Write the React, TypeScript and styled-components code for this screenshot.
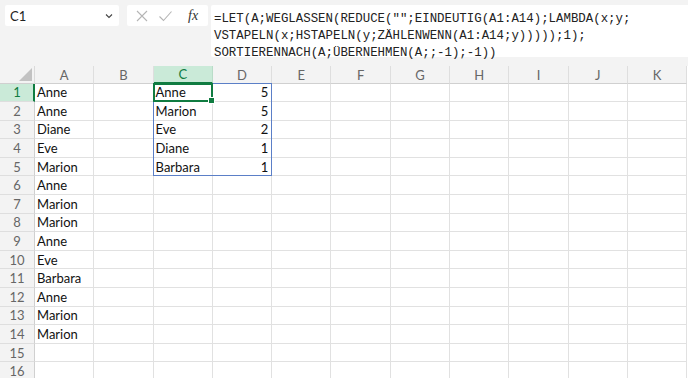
import React from "react";
import styled, { createGlobalStyle } from "styled-components";

const GlobalStyle = createGlobalStyle`
  html, body { margin: 0; padding: 0; background: #f3f3f3; overflow: hidden; }
  * { box-sizing: border-box; }
`;

const COL_W = 59.3;
const ROW_H = 18.6;
const HEAD_H = 17.5;
const ROWHEAD_W = 35;
const COLS = ["A", "B", "C", "D", "E", "F", "G", "H", "I", "J", "K"];

const Page = styled.div`
  width: 688px;
  height: 378px;
  overflow: hidden;
  background: #f3f3f3;
  font-family: Lato, "Open Sans", sans-serif;
`;

const TopBar = styled.div`
  display: flex;
  align-items: flex-start;
  height: 66px;
  padding: 5px 0 0 5px;
`;

const NameBox = styled.div`
  width: 114px;
  height: 21px;
  background: #fff;
  border-radius: 2px;
  display: flex;
  align-items: center;
  justify-content: space-between;
  padding: 0 5px 0 5px;
  font-size: 13px;
  color: #222;
`;

const FxButtons = styled.div`
  width: 81px;
  height: 21px;
  margin-left: 8px;
  background: #fff;
  border-radius: 2px;
  display: flex;
  align-items: center;
  padding-left: 8px;
  gap: 9px;
`;

const FxLabel = styled.span`
  font-family: "Liberation Serif", serif;
  font-style: italic;
  font-size: 14px;
  color: #333;
  margin-left: 6px;
`;

const FormulaInput = styled.div`
  flex: 1;
  height: 52px;
  margin-left: 3px;
  background: #fff;
  border-radius: 2px 0 0 2px;
  padding: 6px 0 0 3px;
  font-family: "Liberation Mono", monospace;
  font-size: 12.4px;
  line-height: 17px;
  color: #222;
  white-space: pre;
`;

const Grid = styled.div`
  display: grid;
  grid-template-columns: ${ROWHEAD_W}px repeat(${COLS.length}, ${COL_W}px);
  grid-template-rows: ${HEAD_H}px repeat(16, ${ROW_H}px);
  background: #fff;
`;

const Corner = styled.div`
  grid-column: 1;
  grid-row: 1;
  background: #f3f3f3;
  border-right: 1px solid #dadada;
  border-bottom: 1px solid #d0d0d0;
  position: relative;
  &::after {
    content: "";
    position: absolute;
    right: 2px;
    bottom: 2px;
    width: 0;
    height: 0;
    border-left: 13px solid transparent;
    border-bottom: 13px solid #c2c2c2;
  }
`;

const ColHead = styled.div<{ $sel?: boolean; $col: number }>`
  grid-row: 1;
  grid-column: ${(p) => p.$col};
  background: ${(p) => (p.$sel ? "#caead8" : "#f3f3f3")};
  color: ${(p) => (p.$sel ? "#107c41" : "#666")};
  border-right: 1px solid ${(p) => (p.$sel ? "#b9dcc8" : "#dedede")};
  border-bottom: ${(p) => (p.$sel ? "2px solid #107c41" : "1px solid #d0d0d0")};
  font-size: 13px;
  display: flex;
  align-items: center;
  justify-content: center;
  padding-top: 1px;
`;

const RowHead = styled.div<{ $sel?: boolean; $row: number }>`
  grid-column: 1;
  grid-row: ${(p) => p.$row};
  background: ${(p) => (p.$sel ? "#caead8" : "#f3f3f3")};
  color: ${(p) => (p.$sel ? "#107c41" : "#666")};
  border-right: ${(p) => (p.$sel ? "2px solid #107c41" : "1px solid #d0d0d0")};
  border-bottom: 1px solid #dedede;
  font-size: 13px;
  display: flex;
  align-items: center;
  justify-content: center;
  padding-left: ${(p) => (p.$sel ? "1px" : "0")};
`;

const Cell = styled.div<{ $num?: boolean; $row: number; $col: number }>`
  grid-row: ${(p) => p.$row};
  grid-column: ${(p) => p.$col};
  border-right: 1px solid #e1e1e1;
  border-bottom: 1px solid #e1e1e1;
  font-size: 13px;
  color: #111;
  display: flex;
  align-items: center;
  justify-content: ${(p) => (p.$num ? "flex-end" : "flex-start")};
  padding: 0 3px 0 2px;
  white-space: nowrap;
`;

const SpillBox = styled.div`
  grid-column: 4 / 6;
  grid-row: 2 / 7;
  border: 1px solid #5b7fc7;
  margin: -1px 0 0 -1px;
  pointer-events: none;
  z-index: 1;
`;

const ActiveBox = styled.div`
  grid-column: 4 / 5;
  grid-row: 2 / 3;
  border: 2px solid #107c41;
  margin: -1px 0 0 -1px;
  pointer-events: none;
  position: relative;
  z-index: 2;
  &::after {
    content: "";
    position: absolute;
    right: -4px;
    bottom: -4px;
    width: 5px;
    height: 5px;
    background: #107c41;
    border: 1px solid #fff;
  }
`;

const colA = [
  "Anne", "Anne", "Diane", "Eve", "Marion", "Anne", "Marion", "Marion",
  "Anne", "Eve", "Barbara", "Anne", "Marion", "Marion", "", "",
];
const colC = ["Anne", "Marion", "Eve", "Diane", "Barbara"];
const colD = ["5", "5", "2", "1", "1"];

const formula = `=LET(A;WEGLASSEN(REDUCE("";EINDEUTIG(A1:A14);LAMBDA(x;y;
VSTAPELN(x;HSTAPELN(y;ZÄHLENWENN(A1:A14;y)))));1);
SORTIERENNACH(A;ÜBERNEHMEN(A;;-1);-1))`;

export default function App() {
  return (
    <Page>
      <GlobalStyle />
      <TopBar>
        <NameBox>
          <span>C1</span>
          <svg width="10" height="10" viewBox="0 0 10 10">
            <path d="M2 3.5 L5 6.5 L8 3.5" fill="none" stroke="#444" strokeWidth="1.1" />
          </svg>
        </NameBox>
        <FxButtons>
          <svg width="14" height="14" viewBox="0 0 14 14">
            <path d="M2 2 L12 12 M12 2 L2 12" stroke="#b5b5b5" strokeWidth="1.1" fill="none" />
          </svg>
          <svg width="15" height="14" viewBox="0 0 15 14">
            <path d="M1.5 7.5 L5.5 11.5 L13.5 2.5" stroke="#b5b5b5" strokeWidth="1.1" fill="none" />
          </svg>
          <FxLabel>fx</FxLabel>
        </FxButtons>
        <FormulaInput>{formula}</FormulaInput>
      </TopBar>
      <Grid>
        <Corner />
        {COLS.map((c, ci) => (
          <ColHead key={c} $col={ci + 2} $sel={c === "C"}>{c}</ColHead>
        ))}
        {colA.map((a, r) => (
          <React.Fragment key={r}>
            <RowHead $row={r + 2} $sel={r === 0}>{r + 1}</RowHead>
            {COLS.map((c, ci) => {
              let v = "";
              let num = false;
              if (c === "A") v = a;
              if (c === "C" && r < 5) v = colC[r];
              if (c === "D" && r < 5) {
                v = colD[r];
                num = true;
              }
              return (
                <Cell key={c} $row={r + 2} $col={ci + 2} $num={num}>
                  {v}
                </Cell>
              );
            })}
          </React.Fragment>
        ))}
        <SpillBox />
        <ActiveBox />
      </Grid>
    </Page>
  );
}
